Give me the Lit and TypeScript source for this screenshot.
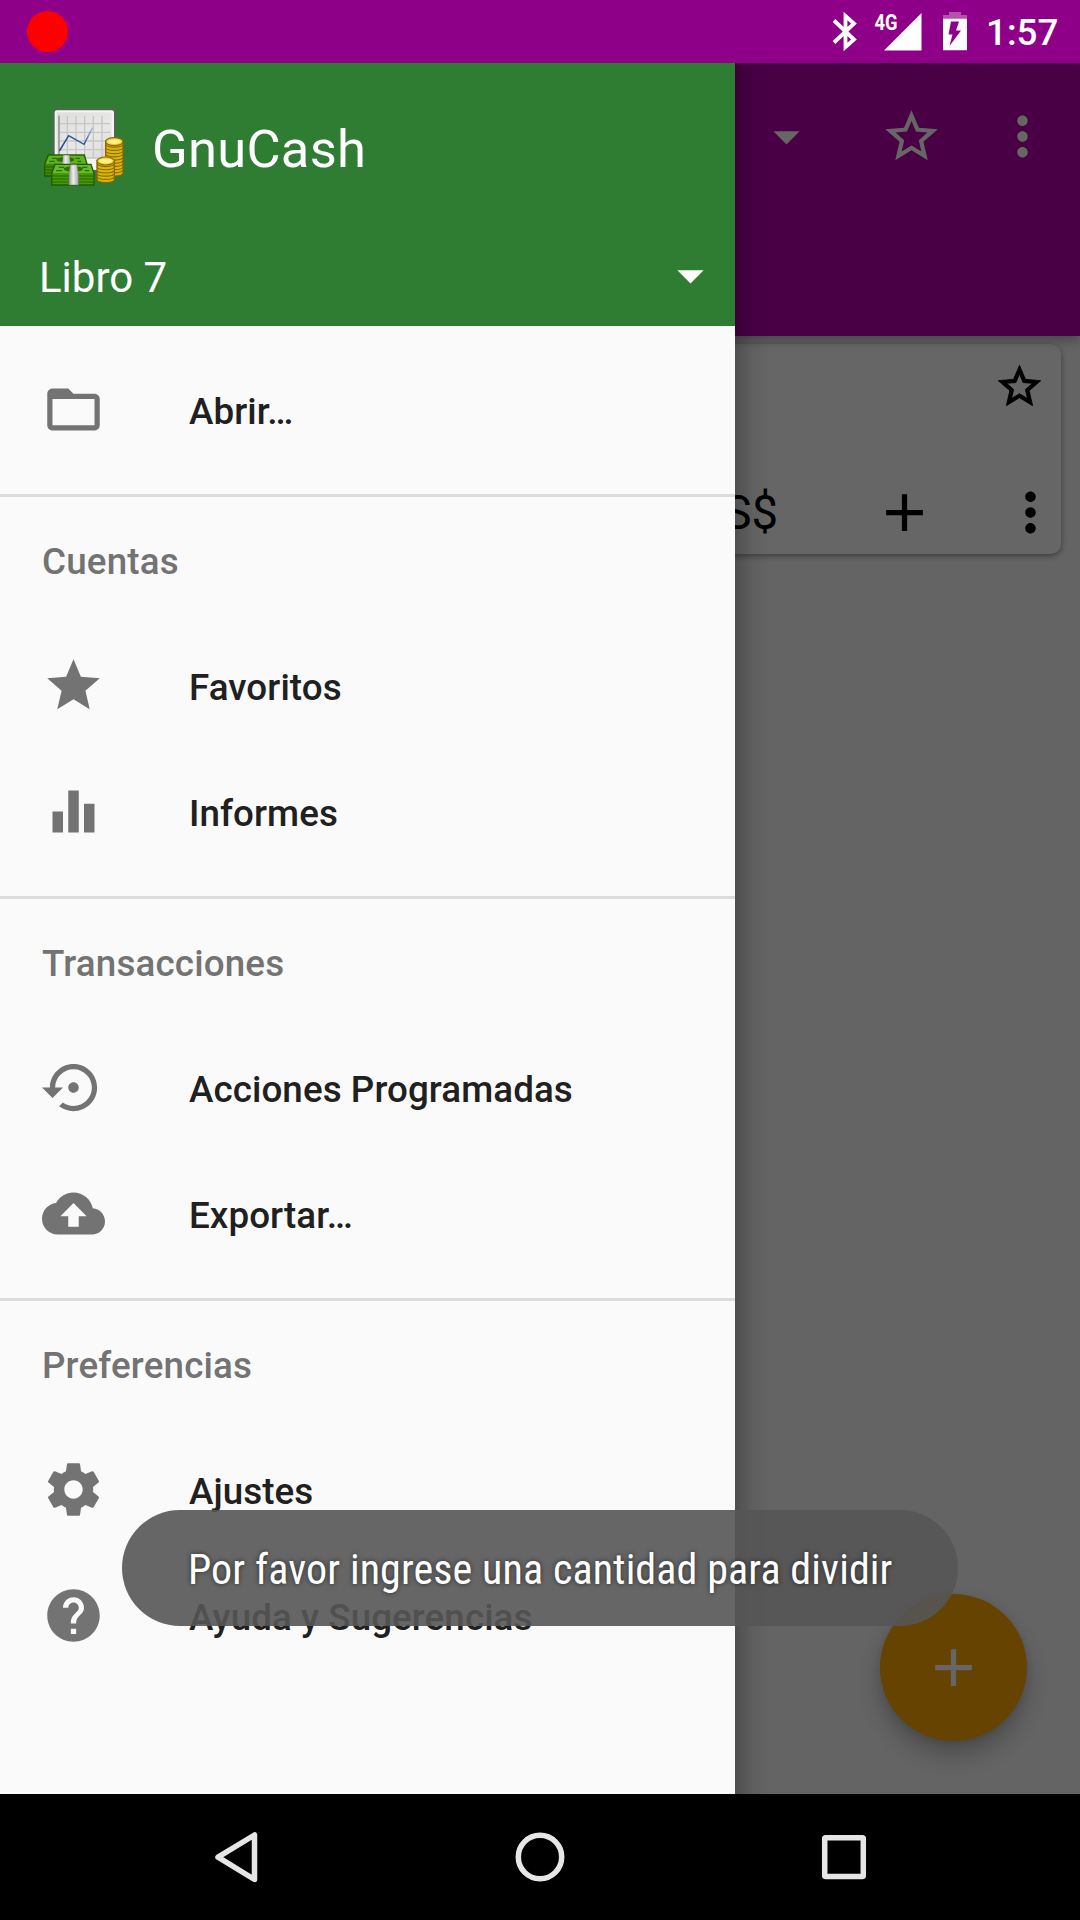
import { LitElement, html, svg, css } from "lit";
import { customElement, property } from "lit/decorators.js";

const STAR_OUTLINE =
  "M22 9.24l-7.19-.62L12 2 9.19 8.63 2 9.24l5.46 4.73L5.82 21 12 17.27 18.18 21l-1.63-7.03L22 9.24zM12 15.4l-3.76 2.27 1-4.28-3.32-2.88 4.38-.38L12 6.1l1.71 4.04 4.38.38-3.32 2.88 1 4.28L12 15.4z";
const MORE =
  "M12 8c1.1 0 2-.9 2-2s-.9-2-2-2-2 .9-2 2 .9 2 2 2zm0 2c-1.1 0-2 .9-2 2s.9 2 2 2 2-.9 2-2-.9-2-2-2zm0 6c-1.1 0-2 .9-2 2s.9 2 2 2 2-.9 2-2-.9-2-2-2z";
const CARET = "M7 10l5 5 5-5z";
const PLUS = "M19 13h-6v6h-2v-6H5v-2h6V5h2v6h6v2z";
const FOLDER =
  "M20 6h-8l-2-2H4c-1.1 0-1.99.9-1.99 2L2 18c0 1.1.9 2 2 2h16c1.1 0 2-.9 2-2V8c0-1.1-.9-2-2-2zm0 12H4V8h16v10z";
const STAR = "M12 17.27L18.18 21l-1.64-7.03L22 9.24l-7.19-.61L12 2 9.19 8.63 2 9.24l5.46 4.73L5.82 21z";
const BARS = "M10 20h4V4h-4v16zm-6 0h4v-8H4v8zM16 9v11h4V9h-4z";
const RESTORE =
  "M14 12c0-1.1-.9-2-2-2s-2 .9-2 2 .9 2 2 2 2-.9 2-2zm-2-9c-4.97 0-9 4.03-9 9H0l4 4 4-4H5c0-3.87 3.13-7 7-7s7 3.13 7 7-3.13 7-7 7c-1.51 0-2.91-.49-4.06-1.3l-1.42 1.44C8.04 20.3 9.94 21 12 21c4.97 0 9-4.03 9-9s-4.03-9-9-9z";
const CLOUD =
  "M19.35 10.04C18.67 6.59 15.64 4 12 4 9.11 4 6.6 5.64 5.35 8.04 2.34 8.36 0 10.91 0 14c0 3.31 2.69 6 6 6h13c2.76 0 5-2.24 5-5 0-2.64-2.05-4.78-4.65-4.96zM14 13v4h-4v-4H7l5-5 5 5h-3z";
const GEAR =
  "M19.43 12.98c.04-.32.07-.64.07-.98s-.03-.66-.07-.98l2.11-1.65c.19-.15.24-.42.12-.64l-2-3.46c-.12-.22-.39-.3-.61-.22l-2.49 1c-.52-.4-1.08-.73-1.69-.98l-.38-2.65C14.46 2.18 14.25 2 14 2h-4c-.25 0-.46.18-.49.42l-.38 2.65c-.61.25-1.17.59-1.69.98l-2.49-1c-.23-.09-.49 0-.61.22l-2 3.46c-.13.22-.07.49.12.64l2.11 1.65c-.04.32-.07.65-.07.98s.03.66.07.98l-2.11 1.65c-.19.15-.24.42-.12.64l2 3.46c.12.22.39.3.61.22l2.49-1c.52.4 1.08.73 1.69.98l.38 2.65c.03.24.24.42.49.42h4c.25 0 .46-.18.49-.42l.38-2.65c.61-.25 1.17-.59 1.69-.98l2.49 1c.23.09.49 0 .61-.22l2-3.46c.12-.22.07-.49-.12-.64l-2.11-1.65zM12 15.5c-1.93 0-3.5-1.57-3.5-3.5s1.57-3.5 3.5-3.5 3.5 1.57 3.5 3.5-1.57 3.5-3.5 3.5z";
const HELP =
  "M12 2C6.48 2 2 6.48 2 12s4.48 10 10 10 10-4.48 10-10S17.52 2 12 2zm1 17h-2v-2h2v2zm2.07-7.75l-.9.92C13.45 12.9 13 13.5 13 15h-2v-.5c0-1.1.45-2.1 1.17-2.83l1.24-1.26c.37-.36.59-.86.59-1.41 0-1.1-.9-2-2-2s-2 .9-2 2H8c0-2.21 1.79-4 4-4s4 1.79 4 4c0 .88-.36 1.68-.93 2.25z";

interface Item {
  icon: string;
  label: string;
}
interface Group {
  title?: string;
  items: Item[];
}

const GROUPS: Group[] = [
  { items: [{ icon: FOLDER, label: "Abrir…" }] },
  {
    title: "Cuentas",
    items: [
      { icon: STAR, label: "Favoritos" },
      { icon: BARS, label: "Informes" },
    ],
  },
  {
    title: "Transacciones",
    items: [
      { icon: RESTORE, label: "Acciones Programadas" },
      { icon: CLOUD, label: "Exportar…" },
    ],
  },
  {
    title: "Preferencias",
    items: [
      { icon: GEAR, label: "Ajustes" },
      { icon: HELP, label: "Ayuda y Sugerencias" },
    ],
  },
];

@customElement("md-icon")
export class MdIcon extends LitElement {
  @property() path = "";
  static styles = css`
    :host { display: block; flex: none; width: 63px; height: 63px; }
    .glyph { display: block; width: 100%; height: 100%; fill: currentColor; }
  `;
  render() {
    return html`<svg class="glyph" viewBox="0 0 24 24"><path d=${this.path}></path></svg>`;
  }
}

@customElement("status-bar")
export class StatusBar extends LitElement {
  static styles = css`
    :host { display: flex; flex: none; height: 63px; background: #8e0087; color: #fff; align-items: center; padding: 0 22px 0 27px; box-sizing: border-box; }
    .rec { width: 41px; height: 41px; border-radius: 50%; background: #f00; margin-right: auto; }
    .icons { display: block; width: 150px; height: 63px; }
    .net { font: 700 22px Roboto, sans-serif; fill: #fff; }
    .clock { font: 500 36.75px/63px Roboto, sans-serif; padding-top: 2px; margin-left: 6px; width: 72px; white-space: nowrap; }
  `;
  render() {
    return html`
      <div class="rec"></div>
      <svg class="icons" viewBox="830 0 150 63">
        <path d="M834 20.5L854 39.5L845.5 47V16L854 23.5L834 42.5" fill="none" stroke="#fff" stroke-width="3.8"></path>
        <text class="net" x="874.5" y="29.5" textLength="23" lengthAdjust="spacingAndGlyphs">4G</text>
        <path d="M921.5 13V50.5H884z" fill="#fff"></path>
        <path d="M949 12h12v3h6v4h-24v-4h6z" fill="#fff" fill-opacity=".32"></path>
        <path d="M943 18.7h24V50.3h-24zM951 21.500l-2.500 13h4L949.500 46l11.500-15.500h-5l3-9z" fill="#fff" fill-rule="evenodd"></path>
      </svg>
      <div class="clock">1:57</div>
    `;
  }
}

const chips = (cx: number, top: number, count: number) =>
  Array.from({ length: count }, (_, i) => {
    const y = top + (count - 1 - i) * 9.6;
    return svg`<path d="M${cx - 26} ${y}v9c0 13 52 13 52 0v-9z" fill="#dcb900" stroke="#8a6400" stroke-width="3.500"></path>`;
  });

@customElement("cash-logo")
export class CashLogo extends LitElement {
  static styles = css`
    :host { display: block; flex: none; width: 110px; height: 100px; }
    .art { display: block; width: 110px; height: 100px; }
  `;
  render() {
    return html`
      <svg class="art" viewBox="0 0 330 300">
        <defs>
          <linearGradient id="paper" x1="0" y1="0" x2="1" y2="1">
            <stop offset="0" stop-color="#dededc"></stop>
            <stop offset=".6" stop-color="#e8e8e6"></stop>
            <stop offset="1" stop-color="#d8d8d6"></stop>
          </linearGradient>
          <linearGradient id="band" x1="0" y1="0" x2="1" y2="0">
            <stop offset="0" stop-color="#999"></stop>
            <stop offset=".45" stop-color="#eee"></stop>
            <stop offset="1" stop-color="#aaa"></stop>
          </linearGradient>
          <linearGradient id="line" gradientUnits="userSpaceOnUse" x1="88" y1="0" x2="190" y2="0">
            <stop offset="0" stop-color="#204a97"></stop>
            <stop offset=".75" stop-color="#2c5aa8"></stop>
            <stop offset="1" stop-color="#3465b4" stop-opacity=".2"></stop>
          </linearGradient>
        </defs>
        <rect x="71.500" y="43.500" width="183" height="184" rx="9" fill="#f4f4f4" stroke="#5c6058" stroke-width="5"></rect>
        <rect x="80" y="52" width="165" height="138" fill="url(#paper)"></rect>
        <path d="M112 62V190M138 62V190M164 62V190M190 62V190M216 62V190M88 86H240M88 112H240M88 138H240M88 164H240M88 189H240" stroke="#c6c6c4" stroke-width="4" fill="none"></path>
        <path d="M87 62V190" stroke="#9a9a98" stroke-width="5"></path>
        <path d="M88 168L116 122L162 148L188 98" fill="none" stroke="url(#line)" stroke-width="4.500"></path>
        <path d="M55 180H163L171 207V243H44V207z" fill="#3c8a06" stroke="#245a02" stroke-width="4"></path>
        <path d="M57 182H161L168 206H47z" fill="#60b41c"></path>
        <path d="M44 216H170M44 225H170M44 234H170" stroke="#286200" stroke-width="3"></path>
        <ellipse cx="106" cy="194" rx="27" ry="8" fill="#2c7000"></ellipse>
        <path d="M66 190h16M58 199h16M136 190h14M142 199h12" stroke="#2c7000" stroke-width="4"></path>
        <path d="M100 181h18l3 28H96z" fill="url(#band)"></path>
        ${chips(253, 138, 10)}
        <ellipse cx="253" cy="140" rx="26" ry="12" fill="#f0d23a" stroke="#8a6400" stroke-width="3.500"></ellipse>
        <ellipse cx="253" cy="140" rx="19" ry="7" fill="#fff080"></ellipse>
        ${chips(227, 196, 6)}
        <ellipse cx="227" cy="198" rx="26" ry="12" fill="#f0d23a" stroke="#8a6400" stroke-width="3.500"></ellipse>
        <ellipse cx="227" cy="198" rx="19" ry="7" fill="#fff080"></ellipse>
        <path d="M75 208H183L192 235V270H65V235z" fill="#449a08" stroke="#245a02" stroke-width="4"></path>
        <path d="M77 210H181L189 234H68z" fill="#66bc22"></path>
        <path d="M66 243H191M66 252H191M66 261H191" stroke="#286200" stroke-width="3"></path>
        <ellipse cx="130" cy="222" rx="29" ry="8" fill="#2c7000"></ellipse>
        <path d="M86 217h16M78 227h18M156 217h16M164 227h14" stroke="#2c7000" stroke-width="4"></path>
        <path d="M121 209h20l4 27v34h-28v-34z" fill="url(#band)" stroke="#777" stroke-width="1.500"></path>
      </svg>
    `;
  }
}

@customElement("accounts-page")
export class AccountsPage extends LitElement {
  static styles = css`
    :host { display: flex; flex-direction: column; height: 100%; background: #fafafa; }
    .bar { position: relative; height: 273px; flex: none; box-sizing: border-box; background: #b600ad; color: #fff; display: flex; justify-content: flex-end; padding: 42px 26px 0 0; box-shadow: 0 5px 10px rgba(0, 0, 0, 0.28); }
    .pick { margin-right: 62px; }
    .fav { margin-right: 48px; }
    .card { margin: 8px 19px 0; height: 210px; border-radius: 10px; background: #fff; box-shadow: 0 2px 6px rgba(0, 0, 0, 0.4); box-sizing: border-box; padding: 17px 0 0; display: flex; flex-direction: column; align-items: flex-end; }
    .mark { width: 51px; height: 51px; margin-right: 16.5px; stroke: #000; stroke-width: 0.4px; }
    .foot { display: flex; align-items: center; margin-top: 68px; margin-right: -0.5px; }
    .sum { font: 400 47.25px/64px Roboto, sans-serif; margin-right: 94.5px; padding-top: 1px; }
    .add { margin-right: 63px; }
    .fab { position: absolute; right: 53px; bottom: 53px; width: 147px; height: 147px; border-radius: 50%; background: #ffa800; color: #fff; display: flex; align-items: center; justify-content: center; box-shadow: 0 14px 26px rgba(0, 0, 0, 0.24), 0 3px 8px rgba(0, 0, 0, 0.1); }
  `;
  render() {
    return html`
      <div class="bar">
        <md-icon class="pick" .path=${CARET}></md-icon>
        <md-icon class="fav" .path=${STAR_OUTLINE}></md-icon>
        <md-icon .path=${MORE}></md-icon>
      </div>
      <div class="card">
        <md-icon class="mark" .path=${STAR_OUTLINE}></md-icon>
        <div class="foot">
          <span class="sum">US$</span>
          <md-icon class="add" .path=${PLUS}></md-icon>
          <md-icon .path=${MORE}></md-icon>
        </div>
      </div>
      <div class="fab"><md-icon .path=${PLUS}></md-icon></div>
    `;
  }
}

@customElement("nav-drawer")
export class NavDrawer extends LitElement {
  static styles = css`
    :host { display: flex; flex-direction: column; background: #fafafa; font-family: Roboto, sans-serif; }
    .head { height: 263px; flex: none; box-sizing: border-box; background: #2f7d32; color: #fff; display: flex; flex-direction: column; justify-content: space-between; padding-top: 32px; }
    .brand { display: flex; align-items: center; gap: 12px; padding-left: 30px; height: 100px; }
    .name { font-size: 52.5px; letter-spacing: 0.25px; padding-top: 7px; }
    .book { display: flex; align-items: center; justify-content: space-between; height: 97px; padding: 0 13px 0 39px; font-size: 42px; }
    .drop { margin-bottom: 4px; }
    .list { padding-top: 21px; }
    .group { padding-bottom: 21px; border-bottom: 3px solid #dcdcdc; }
    .group:last-child { border-bottom: none; }
    .title, .row { height: 126px; box-sizing: border-box; font-weight: 500; font-size: 36.75px; display: flex; align-items: center; padding-left: 42px; }
    .title { color: #737373; padding-top: 2px; letter-spacing: 0.17px; }
    .row { color: #202020; gap: 84px; }
    .ico { color: #737373; margin-bottom: 1px; }
    .label { padding-top: 2px; letter-spacing: 0.08px; }
  `;
  render() {
    return html`
      <div class="head">
        <div class="brand"><cash-logo></cash-logo><span class="name">GnuCash</span></div>
        <div class="book"><span>Libro 7</span><md-icon class="drop" .path=${CARET}></md-icon></div>
      </div>
      <div class="list">
        ${GROUPS.map(
          (g) => html`<div class="group">
            ${g.title ? html`<div class="title">${g.title}</div>` : null}
            ${g.items.map(
              (i) => html`<div class="row"><md-icon class="ico" .path=${i.icon}></md-icon><span class="label">${i.label}</span></div>`
            )}
          </div>`
        )}
      </div>
    `;
  }
}

@customElement("app-root")
export class AppRoot extends LitElement {
  static styles = css`
    :host { display: flex; flex-direction: column; position: relative; width: 1080px; height: 1920px; overflow: hidden; font-family: Roboto, sans-serif; }
    .stage { position: relative; flex: 1; overflow: hidden; }
    .scrim { position: absolute; inset: 0; background: rgba(0, 0, 0, 0.6); }
    .drawer { position: absolute; left: 0; top: 0; bottom: 0; width: 735px; }
    .edge { position: absolute; left: 735px; top: 0; bottom: 0; width: 36px; background: linear-gradient(90deg, rgba(0, 0, 0, 0.22), rgba(0, 0, 0, 0.06) 50%, transparent); }
    .toast { position: absolute; left: 122px; top: 1510px; width: 836px; height: 116px; border-radius: 58px; background: rgba(85, 85, 85, 0.9); color: #fff; box-sizing: border-box; padding-left: 66px; }
    .msg { display: block; width: max-content; font: 400 42px/116px "Roboto Condensed", Roboto, sans-serif; letter-spacing: 0.11px; padding-top: 2px; text-shadow: 0 0 5px rgba(0, 0, 0, 0.6); white-space: nowrap; }
    .nav { flex: none; height: 126px; background: #000; }
    .keys { display: block; width: 1080px; height: 126px; }
  `;
  render() {
    return html`
      <status-bar></status-bar>
      <div class="stage">
        <accounts-page></accounts-page>
        <div class="scrim"></div>
        <div class="edge"></div>
        <nav-drawer class="drawer"></nav-drawer>
      </div>
      <div class="nav">
        <svg class="keys" viewBox="0 0 1080 126" fill="none" stroke="#e6e6e6" stroke-width="5.500" stroke-linejoin="round">
          <path d="M218 63.200L254.500 41V85.500z"></path>
          <circle cx="540" cy="63" r="21.700"></circle>
          <rect x="824.700" y="43.800" width="38.600" height="38.600" rx="1"></rect>
        </svg>
      </div>
      <div class="toast"><span class="msg">Por favor ingrese una cantidad para dividir</span></div>
    `;
  }
}
